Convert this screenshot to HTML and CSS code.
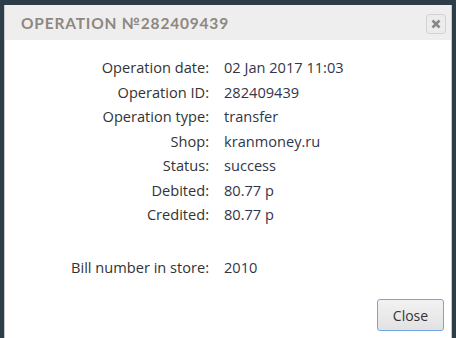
FILE: index.html
```html
<!DOCTYPE html>
<html>
<head>
<meta charset="utf-8">
<link rel="stylesheet" href="styles.css">
</head>
<body>
<div class="dialog">
  <div class="header">
    <span class="title">OPERATION №282409439</span>
    <button class="x-btn" aria-label="close">
      <svg width="10" height="10" viewBox="0 0 10 10"><path d="M1.5 1.5 L8.5 8.5 M8.5 1.5 L1.5 8.5" stroke="#888" stroke-width="2.6" stroke-linecap="butt"/></svg>
    </button>
  </div>
  <div class="body">
    <div class="grid">
      <div class="label">Operation date:</div><div class="value">02 Jan 2017 11:03</div>
      <div class="label">Operation ID:</div><div class="value">282409439</div>
      <div class="label">Operation type:</div><div class="value">transfer</div>
      <div class="label">Shop:</div><div class="value">kranmoney.ru</div>
      <div class="label">Status:</div><div class="value">success</div>
      <div class="label">Debited:</div><div class="value">80.77 р</div>
      <div class="label">Credited:</div><div class="value">80.77 р</div>
      <div class="label spacer">&nbsp;</div><div class="value spacer">&nbsp;</div>
      <div class="label">Bill number in store:</div><div class="value">2010</div>
    </div>
  </div>
  <div class="footer">
    <button class="close-btn">Close</button>
  </div>
</div>
</body>
</html>
```
FILE: styles.css
```css
html, body {
  margin: 0;
  padding: 0;
  background: #2e3e48;
  width: 456px;
  height: 338px;
  overflow: hidden;
}
body {
  padding: 5px 0 0 4px;
  box-sizing: border-box;
}
.dialog {
  width: 448px;
  height: 340px;
  background: #fff;
  border-left: 1px solid #c9c9c9;
  border-right: 1px solid #c9c9c9;
  box-sizing: border-box;
}
.header {
  height: 35px;
  background: #eeeeee;
  display: flex;
  align-items: center;
  justify-content: space-between;
  padding: 0 5px 0 16px;
}
.title {
  font-family: "Lato", "Open Sans", sans-serif;
  font-weight: 700;
  font-size: 15.5px;
  letter-spacing: 0.8px;
  color: #8f877f;
  margin-top: 1px;
}
.x-btn {
  width: 20px;
  height: 20px;
  border: 1px solid #d2d2d2;
  border-radius: 3px;
  background: #ececec;
  padding: 0;
  display: flex;
  align-items: center;
  justify-content: center;
  margin-top: 2px;
}
.body {
  padding-top: 15px;
}
.grid {
  display: grid;
  grid-template-columns: 204px auto;
  column-gap: 15px;
  row-gap: 0;
  font-family: "Open Sans", sans-serif;
  font-size: 14.6px;
  line-height: 24.5px;
}
.label {
  text-align: right;
  color: #333;
}
.value {
  color: #32364a;
}
.spacer {
  height: 28px;
}
.footer {
  display: flex;
  justify-content: flex-end;
  padding: 20px 7px 0 0;
}
.close-btn {
  width: 67px;
  height: 32px;
  border: 1px solid #6fa6e6;
  border-radius: 3px;
  background: linear-gradient(#f2f2f2, #e2e2e2);
  font-family: "Open Sans", sans-serif;
  font-size: 14px;
  color: #333;
  padding: 0;
}
```
